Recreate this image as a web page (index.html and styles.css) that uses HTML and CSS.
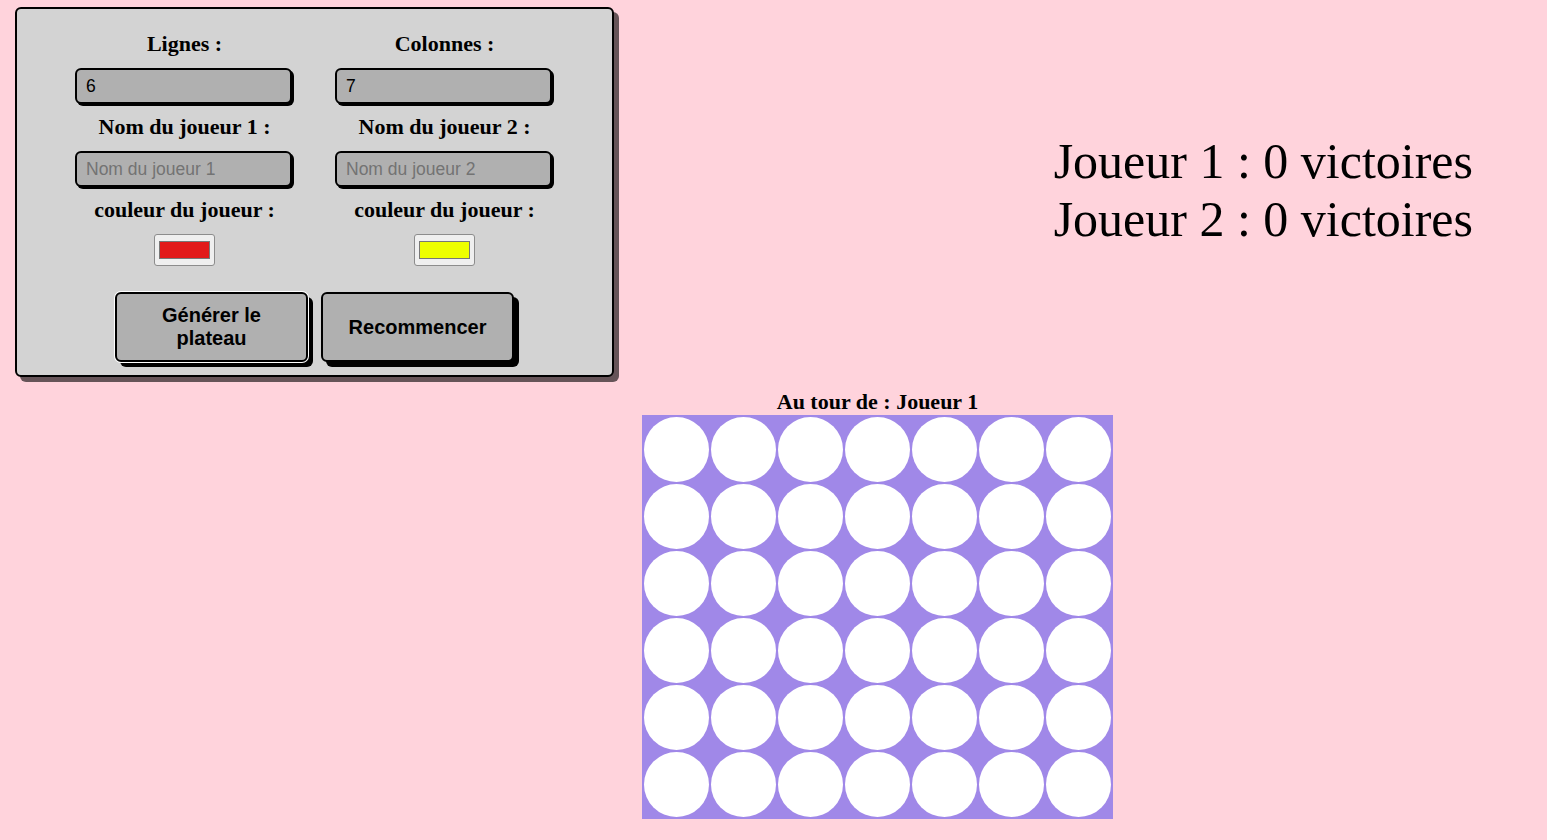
FILE: index.html
```html
<!DOCTYPE html>
<html lang="fr">
<head>
<meta charset="utf-8">
<title>Puissance 4</title>
<link rel="stylesheet" href="styles.css">
</head>
<body>
<div class="top">
  <form class="panel">
    <div class="fields">
      <div class="col">
        <label class="lbl" for="lignes">Lignes :</label>
        <input class="txt" id="lignes" type="text" value="6">
        <label class="lbl" for="nom1">Nom du joueur 1 :</label>
        <input class="txt" id="nom1" type="text" placeholder="Nom du joueur 1">
        <label class="lbl" for="c1">couleur du joueur :</label>
        <input class="color" id="c1" type="color" value="#e21919">
      </div>
      <div class="col">
        <label class="lbl" for="colonnes">Colonnes :</label>
        <input class="txt" id="colonnes" type="text" value="7">
        <label class="lbl" for="nom2">Nom du joueur 2 :</label>
        <input class="txt" id="nom2" type="text" placeholder="Nom du joueur 2">
        <label class="lbl" for="c2">couleur du joueur :</label>
        <input class="color" id="c2" type="color" value="#eeff00">
      </div>
    </div>
    <div class="actions">
      <button type="button" class="btn btn-focus">Générer le plateau</button>
      <button type="button" class="btn">Recommencer</button>
    </div>
  </form>
  <div class="scores">
    <div>Joueur 1 : 0 victoires</div>
    <div>Joueur 2 : 0 victoires</div>
  </div>
</div>
<div class="game">
  <div class="turn">Au tour de : Joueur 1</div>
  <div class="board">
    <div class="cell"></div><div class="cell"></div><div class="cell"></div><div class="cell"></div><div class="cell"></div><div class="cell"></div><div class="cell"></div>
    <div class="cell"></div><div class="cell"></div><div class="cell"></div><div class="cell"></div><div class="cell"></div><div class="cell"></div><div class="cell"></div>
    <div class="cell"></div><div class="cell"></div><div class="cell"></div><div class="cell"></div><div class="cell"></div><div class="cell"></div><div class="cell"></div>
    <div class="cell"></div><div class="cell"></div><div class="cell"></div><div class="cell"></div><div class="cell"></div><div class="cell"></div><div class="cell"></div>
    <div class="cell"></div><div class="cell"></div><div class="cell"></div><div class="cell"></div><div class="cell"></div><div class="cell"></div><div class="cell"></div>
    <div class="cell"></div><div class="cell"></div><div class="cell"></div><div class="cell"></div><div class="cell"></div><div class="cell"></div><div class="cell"></div>
  </div>
</div>
</body>
</html>
```
FILE: styles.css
```css
* { box-sizing: border-box; }

html, body {
  margin: 0;
  padding: 0;
  background: #ffd3dc;
  font-family: "Liberation Serif", "Times New Roman", serif;
  color: #000;
}

.top {
  display: flex;
  align-items: center;
  padding: 7px 74px 0 15px;
}

.panel {
  width: 599px;
  margin: 0;
  background: #d3d3d3;
  border: 2px solid #000;
  border-radius: 6px;
  box-shadow: 5px 5px 0 #665458;
  padding: 22px 0 13px;
}

.fields {
  display: grid;
  grid-template-columns: 260px 260px;
  justify-content: center;
}

.col {
  display: flex;
  flex-direction: column;
  align-items: center;
}

.lbl {
  font-weight: bold;
  font-size: 22px;
  line-height: 25px;
  margin-bottom: 12px;
}

.txt {
  width: 217px;
  height: 36px;
  margin: 0 2px 10px 0;
  padding: 0 9px;
  border: 2px solid #000;
  border-radius: 6px;
  background: #b0b0b0;
  box-shadow: 2px 2px 0 #000;
  font-family: "Liberation Sans", Arial, sans-serif;
  font-size: 17.5px;
  color: #000;
  outline: none;
}

.txt::placeholder {
  color: #737373;
}

.color {
  -webkit-appearance: none;
  appearance: none;
  width: 61px;
  height: 32px;
  margin: 0;
  padding: 0;
  border: 1px solid #8c8c8c;
  border-radius: 3px;
  background: #efefef;
  cursor: pointer;
}

.color::-webkit-color-swatch-wrapper {
  padding: 6px 4px;
}

.color::-webkit-color-swatch {
  border: 1px solid #777;
  border-radius: 0;
}

.actions {
  display: flex;
  justify-content: center;
  gap: 13px;
  margin-top: 26px;
}

.btn {
  width: 193px;
  padding: 10px;
  border: 2px solid #000;
  border-radius: 6px;
  background: #b0b0b0;
  box-shadow: 5px 5px 0 #000;
  font-family: "Liberation Sans", Arial, sans-serif;
  font-weight: bold;
  font-size: 20px;
  line-height: 23px;
  color: #000;
  cursor: pointer;
}

.btn-focus {
  box-shadow: 0 0 0 1px #fff, 5px 5px 0 #000;
}

.scores {
  margin-left: auto;
  margin-bottom: 4px;
  font-size: 50px;
  line-height: 58px;
  white-space: nowrap;
}

.game {
  display: flex;
  flex-direction: column;
  align-items: center;
  padding-left: 208px;
  margin-top: 12px;
}

.turn {
  font-weight: bold;
  font-size: 22px;
  line-height: 26px;
}

.board {
  display: grid;
  grid-template-columns: repeat(7, 65px);
  grid-auto-rows: 65px;
  gap: 2px;
  padding: 2px;
  background: #a088e8;
}

.cell {
  background: #fff;
  border-radius: 50%;
}
```
